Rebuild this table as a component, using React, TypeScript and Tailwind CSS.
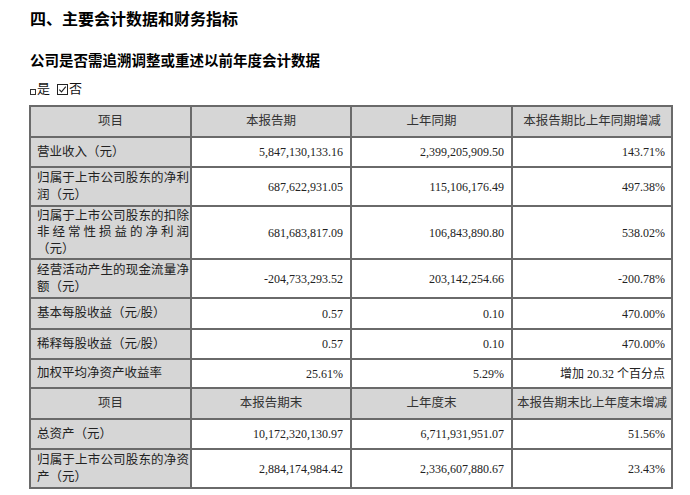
const serif = "font-['Liberation_Serif','Noto_Sans_CJK_SC',serif]";

type Row = {
    label: string;
    cur: string;
    prev: string;
    diff: string;
    h: string;
};

const rowsTop: Row[] = [
    { label: "营业收入（元）", cur: "5,847,130,133.16", prev: "2,399,205,909.50", diff: "143.71%", h: "h-[30px]" },
    { label: "归属于上市公司股东的净利润（元）", cur: "687,622,931.05", prev: "115,106,176.49", diff: "497.38%", h: "h-[39px]" },
    { label: "归属于上市公司股东的扣除非经常性损益的净利润（元）", cur: "681,683,817.09", prev: "106,843,890.80", diff: "538.02%", h: "h-[53px]" },
    { label: "经营活动产生的现金流量净额（元）", cur: "-204,733,293.52", prev: "203,142,254.66", diff: "-200.78%", h: "h-[39px]" },
    { label: "基本每股收益（元/股）", cur: "0.57", prev: "0.10", diff: "470.00%", h: "h-[31px]" },
    { label: "稀释每股收益（元/股）", cur: "0.57", prev: "0.10", diff: "470.00%", h: "h-[30px]" },
    { label: "加权平均净资产收益率", cur: "25.61%", prev: "5.29%", diff: "增加 20.32 个百分点", h: "h-[29px]" },
];

const rowsBottom: Row[] = [
    { label: "总资产（元）", cur: "10,172,320,130.97", prev: "6,711,931,951.07", diff: "51.56%", h: "h-[30px]" },
    { label: "归属于上市公司股东的净资产（元）", cur: "2,884,174,984.42", prev: "2,336,607,880.67", diff: "23.43%", h: "h-[39px]" },
];

const cell = "border-2 border-[#6a6a6a] align-middle";

const HeaderRow = ({ cols, h }: { cols: string[]; h: string }) => (
    <tr className={`${h} bg-[#d6d6d6]`}>
        {cols.map((c) => (
            <td key={c} className={`${cell} text-center text-[12.5px] text-[#333]`}>
                {c}
            </td>
        ))}
    </tr>
);

const DataRow = ({ row }: { row: Row }) => (
    <tr className={row.h}>
        <td className={`${cell} bg-[#d6d6d6] pl-[6px] pr-0`}>
            <div className="w-[152px] text-justify text-[12.5px] leading-[16.5px] text-[#222]">{row.label}</div>
        </td>
        <td className={`${cell} text-right pr-[7px] text-[12px] text-[#222]`}>{row.cur}</td>
        <td className={`${cell} text-right pr-[7px] text-[12px] text-[#222]`}>{row.prev}</td>
        <td className={`${cell} text-right pr-[6px] text-[12px] text-[#222]`}>{row.diff}</td>
    </tr>
);

// checked box, drawn since the glyph renders too small
const CheckedBox = () => (
    <svg width="11" height="11" viewBox="0 0 11 11" className="ml-[7px] mr-[1px]">
        <rect x="0.5" y="0.5" width="10" height="10" fill="none" stroke="#222" strokeWidth="1" />
        <path d="M2.3 5.6 L4.5 7.9 L8.8 2.6" fill="none" stroke="#222" strokeWidth="1.1" />
    </svg>
);

export default function App() {
    return (
        <div className={`w-[690px] h-[495px] bg-white overflow-hidden ${serif}`}>
            <h1 className="pl-[30px] pt-[8px] text-[16px] leading-[20px] font-bold text-black font-['Noto_Sans_CJK_SC',sans-serif]">
                四、主要会计数据和财务指标
            </h1>
            <h2 className="pl-[30px] mt-[22px] text-[14.5px] leading-[20px] font-bold text-black font-['Noto_Sans_CJK_SC',sans-serif]">
                公司是否需追溯调整或重述以前年度会计数据
            </h2>
            <div className="pl-[30px] mt-[10px] h-[18px] flex items-center text-[13px] leading-[18px] text-[#111]">
                <span className="inline-block w-[6px] h-[6px] border border-[#333] mt-[5px] mr-[1px]" />
                <span>是</span>
                <CheckedBox />
                <span>否</span>
            </div>
            <table className="ml-[29px] mt-[7px] border-collapse table-fixed w-[642px]">
                <colgroup>
                    <col className="w-[161px]" />
                    <col className="w-[160px]" />
                    <col className="w-[161px]" />
                    <col className="w-[160px]" />
                </colgroup>
                <tbody>
                    <HeaderRow h="h-[31px]" cols={["项目", "本报告期", "上年同期", "本报告期比上年同期增减"]} />
                    {rowsTop.map((r) => (
                        <DataRow key={r.label} row={r} />
                    ))}
                    <HeaderRow h="h-[31px]" cols={["项目", "本报告期末", "上年度末", "本报告期末比上年度末增减"]} />
                    {rowsBottom.map((r) => (
                        <DataRow key={r.label} row={r} />
                    ))}
                </tbody>
            </table>
        </div>
    );
}
